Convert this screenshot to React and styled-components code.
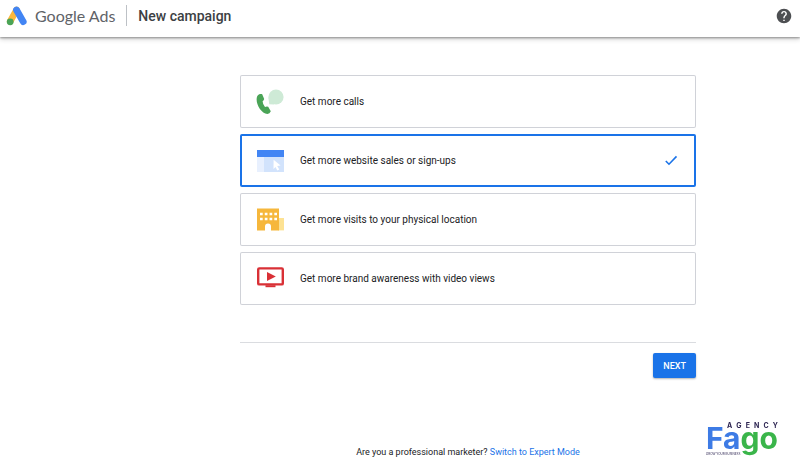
import { useState } from "react"
import styled, { createGlobalStyle } from "styled-components"

const GlobalStyle = createGlobalStyle`
    * {
        box-sizing: border-box;
    }
    body {
        margin: 0;
        background-color: white;
        color: #202124;
        font-family: Roboto, "Liberation Sans", sans-serif;
        font-size: 10px;
    }
`
const Page = styled.div`
    min-height: 100vh;
    display: flex;
    flex-direction: column;
`
const Header = styled.header`
    height: 37px;
    padding: 0 8px 6px 6px;
    display: flex;
    align-items: center;
    box-shadow: 0 1px 2px rgba(0, 0, 0, 0.35), 0 2px 5px rgba(0, 0, 0, 0.2);
`
const Brand = styled.span`
    margin-left: 8px;
    color: #5f6368;
    font-family: Lato, sans-serif;
    font-size: 16px;
    line-height: 20px;
`
const Divider = styled.span`
    width: 1px;
    height: 21px;
    margin: 0 11px;
    background-color: #bdc1c6;
`
const Title = styled.h1`
    flex: 1;
    margin: 0;
    color: #3c4043;
    font-size: 14px;
    font-weight: 500;
    line-height: 20px;
`
const HelpButton = styled.button`
    display: flex;
    padding: 0;
    border: none;
    background: none;
    cursor: pointer;
`
const Main = styled.main`
    flex: 1;
    width: 57%;
    margin-left: 30%;
    padding: 38px 0 12px;
    display: flex;
    flex-direction: column;
`
const Goals = styled.fieldset`
    margin: 0;
    padding: 0 0 37px;
    border: none;
    border-bottom: 1px solid #dadce0;
    display: flex;
    flex-direction: column;
    gap: 6px;
`
const Goal = styled.label`
    height: 53px;
    padding: 0 16px;
    display: flex;
    align-items: center;
    border-radius: 2px;
    box-shadow: inset 0 0 0 ${props => props.$selected ? "2px #1a73e8" : "1px #d0d2d8"};
    cursor: pointer;
`
const Radio = styled.input`
    appearance: none;
    width: 0;
    height: 0;
    margin: 0;
    outline: none;
`
const GoalName = styled.span`
    flex: 1;
    margin-left: 16px;
    line-height: 16px;
`
const Actions = styled.div`
    padding-top: 10px;
    display: flex;
    justify-content: flex-end;
`
const NextButton = styled.button`
    height: 25px;
    padding: 0 10px;
    border: none;
    border-radius: 2px;
    background-color: #1a73e8;
    color: white;
    font-family: inherit;
    font-size: 9px;
    font-weight: 500;
    box-shadow: 0 1px 2px rgba(0, 0, 0, 0.3);
    cursor: pointer;
`
const Expert = styled.p`
    margin: auto 0 0;
    font-size: 9px;
    line-height: 12px;
    text-align: center;
`
const Link = styled.a`
    color: #1a73e8;
    text-decoration: none;
`
const Watermark = styled.div`
    position: fixed;
    right: 22px;
    bottom: 14px;
    width: 72px;
    display: flex;
    flex-direction: column;
    font-family: Inter, sans-serif;
    color: #2b2350;
`
const Agency = styled.span`
    display: flex;
    justify-content: space-between;
    margin-left: 21px;
    font-size: 7px;
    font-weight: 700;
    line-height: 8px;
`
const Fago = styled.span`
    height: 22px;
    margin-top: -4px;
    color: #3d7be5;
    font-size: 30px;
    font-weight: 700;
    line-height: 24px;
`
const Green = styled.span`
    color: #3ab54a;
`
const Slogan = styled.span`
    margin-top: 4px;
    font-size: 3px;
    line-height: 4px;
`

const AdsLogo = () => (
    <svg width="21" height="20" viewBox="0 0 21 20" aria-hidden="true">
        <path d="M10.5 4L4.2 15.4" stroke="#fbb83c" strokeWidth="6.6" strokeLinecap="round" />
        <path d="M10.5 4L17.2 15.6" stroke="#4285f4" strokeWidth="6.8" strokeLinecap="round" />
        <circle cx="4.2" cy="15.8" r="3.4" fill="#4aa457" />
    </svg>
)

const CallsIcon = () => (
    <svg width="28" height="28" viewBox="0 0 28 28" aria-hidden="true">
        <circle cx="20" cy="9" r="7.6" fill="#ceead6" />
        <path d="M12.4 9l.8 7.2 5 .2Z" fill="#ceead6" />
        <path d="M1.2 8.2C2.2 6.2 4.5 5.8 6.2 6.2L8.2 11Q8 12.4 6.6 13.2Q6.8 16.6 9 19Q10.8 18 12.2 18.8L14.8 23.3Q13.8 25.8 11.4 25.9C4.7 25.6-1.3 14.6 1.2 8.2Z" fill="#4aa457" />
    </svg>
)

const WebsiteIcon = () => (
    <svg width="28" height="28" viewBox="0 0 28 28" aria-hidden="true">
        <path d="M1 9h7v16H1Z" fill="#e8f0fe" />
        <path d="M8 9h20v16H8Z" fill="#d2e3fc" />
        <path d="M1 3h27v7H1Z" fill="#4285f4" />
        <path d="M17.6 12.8l7 5.8-3.4.3 2.1 3.7-2 1-1.8-3.7-2 2.2Z" fill="white" />
    </svg>
)

const LocationIcon = () => (
    <svg width="28" height="28" viewBox="0 0 28 28" aria-hidden="true">
        <path d="M22 12h6v12.4h-6Z" fill="#fde293" />
        <path d="M1 2.4h22v22h-8v-4a3 3 0 0 0-6 0v4H1Z" fill="#f6b73c" />
        <path d="M4 8h17M4 13h17" stroke="white" strokeWidth="2.6" strokeDasharray="2.7 2.07" />
    </svg>
)

const VideoIcon = () => (
    <svg width="28" height="28" viewBox="0 0 28 28" aria-hidden="true">
        <rect x="2.2" y="3.4" width="24.6" height="16" rx="1" fill="white" stroke="#d93036" strokeWidth="2.4" />
        <path d="M9.5 20.2h10v2h-10Z" fill="#d93036" />
        <path d="M11 7v9l8.8-4.5Z" fill="#d93036" />
    </svg>
)

const CheckIcon = () => (
    <svg width="18" height="18" viewBox="0 0 18 18" fill="none" aria-hidden="true">
        <path d="M3.8 9L7 12.2L14.5 4.4" stroke="#1a73e8" strokeWidth="1.6" />
    </svg>
)

const HelpIcon = () => (
    <svg width="16" height="16" viewBox="1 1 22 22" aria-hidden="true">
        <path fill="#4d4f52" d="M12 2C6.48 2 2 6.48 2 12s4.48 10 10 10 10-4.48 10-10S17.52 2 12 2zm1 17h-2v-2h2v2zm2.07-7.75l-.9.92C13.45 12.9 13 13.5 13 15h-2v-.5c0-1.1.45-2.1 1.17-2.83l1.24-1.26c.37-.36.59-.86.59-1.41 0-1.1-.9-2-2-2s-2 .9-2 2H8c0-2.21 1.79-4 4-4s4 1.79 4 4c0 .88-.36 1.68-.93 2.25z" />
    </svg>
)

const goals = [
    { id: "calls", name: "Get more calls", Icon: CallsIcon },
    { id: "website", name: "Get more website sales or sign-ups", Icon: WebsiteIcon },
    { id: "location", name: "Get more visits to your physical location", Icon: LocationIcon },
    { id: "video", name: "Get more brand awareness with video views", Icon: VideoIcon },
]

const App = () => {
  const [selected, setSelected] = useState("website")

  return (
    <Page>
        <GlobalStyle />
        <Header>
            <AdsLogo />
            <Brand>Google Ads</Brand>
            <Divider />
            <Title>New campaign</Title>
            <HelpButton type="button" aria-label="Help">
                <HelpIcon />
            </HelpButton>
        </Header>

        <Main>
            <Goals aria-label="Campaign goal">
                {goals.map(({ id, name, Icon }) => (
                    <Goal key={id} htmlFor={id} $selected={selected === id}>
                        <Radio
                            type="radio"
                            name="goal"
                            id={id}
                            checked={selected === id}
                            onChange={() => setSelected(id)}
                        />
                        <Icon />
                        <GoalName>{name}</GoalName>
                        {selected === id && <CheckIcon />}
                    </Goal>
                ))}
            </Goals>
            <Actions>
                <NextButton type="button">NEXT</NextButton>
            </Actions>
            <Expert>
                Are you a professional marketer? <Link href="#expert">Switch to Expert Mode</Link>
            </Expert>
        </Main>

        <Watermark>
            <Agency>
                {"AGENCY".split("").map(letter => <span key={letter}>{letter}</span>)}
            </Agency>
            <Fago>Fa<Green>go</Green></Fago>
            <Slogan>GROW YOUR BUSINESS</Slogan>
        </Watermark>
    </Page>
  )
}

export default App
